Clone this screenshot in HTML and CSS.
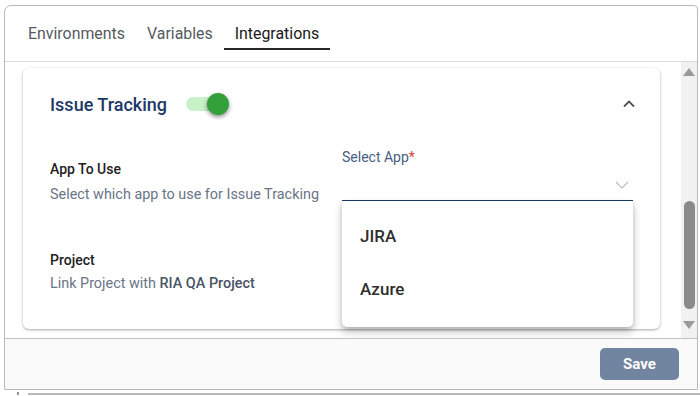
FILE: index.html
```html
<!DOCTYPE html>
<html lang="en">
<head>
    <meta charset="UTF-8">
    <title>Integrations</title>
    <link rel="stylesheet" href="styles.css">
</head>
<body>
    <div class="dialog">
        <div class="tabs">
            <div class="tab">Environments</div>
            <div class="tab">Variables</div>
            <div class="tab active">Integrations</div>
        </div>

        <div class="content">
            <div class="scroll-area">
                <div class="card">
                    <div class="card-header">
                        <h2>Issue Tracking</h2>
                        <div class="toggle"><span class="knob"></span></div>
                        <svg class="collapse" width="14" height="14" viewBox="0 0 14 14">
                            <path d="M2 9.5 L7 4.5 L12 9.5" fill="none" stroke="#555" stroke-width="1.8"/>
                        </svg>
                    </div>

                    <div class="row">
                        <div class="info">
                            <div class="label">App To Use</div>
                            <div class="desc">Select which app to use for Issue Tracking</div>
                        </div>
                        <div class="field">
                            <div class="field-label">Select App<span class="req">*</span></div>
                            <div class="field-input">
                                <svg width="14" height="10" viewBox="0 0 14 10">
                                    <path d="M1 2 L7 8 L13 2" fill="none" stroke="#bbb" stroke-width="1.1"/>
                                </svg>
                            </div>
                            <ul class="menu">
                                <li>JIRA</li>
                                <li>Azure</li>
                            </ul>
                        </div>
                    </div>

                    <div class="row project">
                        <div class="info">
                            <div class="label">Project</div>
                            <div class="desc">Link Project with <b>RIA QA Project</b></div>
                        </div>
                    </div>
                </div>
            </div>
            <div class="scrollbar">
                <span class="arrow up"></span>
                <span class="thumb"></span>
                <span class="arrow down"></span>
            </div>
        </div>

        <div class="footer">
            <button type="button" class="save">Save</button>
        </div>
    </div>
    <div class="under">
        <span class="mark"></span>
        <span class="line"></span>
    </div>
</body>
</html>
```

FILE: styles.css
```css
body {
    margin: 0;
    background: #ffffff;
    font-family: Roboto, "Liberation Sans", Arial, sans-serif;
}

.dialog {
    margin: 5px 2px 0 4px;
    height: 385px;
    border: 1px solid #b9b9b9;
    border-radius: 7px 4px 0 0;
    display: flex;
    flex-direction: column;
    overflow: hidden;
    box-sizing: border-box;
}

.tabs {
    display: flex;
    padding: 10px 0 0 12px;
    height: 56px;
    box-sizing: border-box;
    border-bottom: 1px solid #dcdcdc;
}

.tab {
    padding: 0 11px;
    height: 34px;
    line-height: 35px;
    font-size: 15.9px;
    color: #555a60;
    border-bottom: 2px solid transparent;
    box-sizing: border-box;
}

.tab.active {
    color: #1a1a1a;
    border-bottom-color: #262626;
}

.content {
    display: flex;
    height: 276px;
    border-bottom: 1px solid #c4c4c4;
}

.scroll-area {
    flex: 1;
    padding: 6px 21px 0 18px;
    overflow: hidden;
}

.card {
    position: relative;
    height: 261px;
    background: #ffffff;
    border-radius: 6px;
    box-shadow: 0 1px 3px rgba(0, 0, 0, 0.28), 0 1px 2px rgba(0, 0, 0, 0.08);
    padding: 0 27px;
    box-sizing: border-box;
}

.card-header {
    display: flex;
    align-items: center;
    height: 72px;
}

.card-header h2 {
    margin: 0;
    font-size: 18px;
    font-weight: 500;
    color: #1d3767;
}

.toggle {
    position: relative;
    width: 36px;
    height: 14px;
    margin-left: 19px;
    border-radius: 7px;
    background: #c9f1c9;
}

.knob {
    position: absolute;
    right: -7px;
    top: -4px;
    width: 22px;
    height: 22px;
    border-radius: 50%;
    background: #33a03a;
    box-shadow: 0 2px 4px rgba(0, 0, 0, 0.45);
}

.collapse {
    margin-left: auto;
    margin-right: -3px;
}

.row {
    display: flex;
    justify-content: space-between;
}

.label {
    font-size: 14px;
    font-weight: 500;
    color: #222;
    margin-top: 21px;
}

.desc {
    font-size: 14.4px;
    color: #6a7487;
    margin-top: 9px;
}

.desc b {
    font-weight: 500;
    color: #4a5465;
}

.field {
    position: relative;
    width: 291px;
}

.field-label {
    font-size: 14px;
    color: #475d82;
    margin-top: 9px;
}

.req {
    color: #e53935;
}

.field-input {
    height: 36px;
    border-bottom: 1px solid #1e3765;
    display: flex;
    justify-content: flex-end;
    align-items: center;
    padding: 4px 4px 0 0;
    box-sizing: border-box;
}

.menu {
    position: absolute;
    left: 0;
    right: 0;
    top: 61px;
    margin: 0;
    padding: 9px 0 11px;
    list-style: none;
    background: #ffffff;
    border-radius: 0 0 5px 5px;
    box-shadow: 0 5px 10px rgba(0, 0, 0, 0.22), 0 2px 4px rgba(0, 0, 0, 0.14);
    z-index: 2;
}

.menu li {
    padding: 0 18px;
    height: 53px;
    line-height: 53px;
    font-size: 17px;
    font-weight: 500;
    color: #2e2e2e;
}

.project .label {
    margin-top: 49px;
}

.project .desc {
    margin-top: 7px;
}

.scrollbar {
    width: 16px;
    background: #f1f1f1;
    display: flex;
    flex-direction: column;
    align-items: center;
}

.arrow {
    width: 0;
    height: 0;
    border-left: 6px solid transparent;
    border-right: 6px solid transparent;
}

.arrow.up {
    margin-top: 6px;
    border-bottom: 8px solid #9a9a9a;
}

.thumb {
    width: 11px;
    height: 108px;
    margin-top: 125px;
    border-radius: 6px;
    background: #8a8a8a;
}

.arrow.down {
    margin-top: 12px;
    border-top: 8px solid #9a9a9a;
}

.footer {
    flex: 1;
    background: #fafafa;
    display: flex;
    justify-content: flex-end;
    align-items: flex-start;
    padding: 9px 18px 0 0;
}

.save {
    width: 79px;
    height: 32px;
    border: none;
    border-radius: 5px;
    background: #7184a0;
    color: #ffffff;
    font-family: inherit;
    font-size: 15px;
    font-weight: 700;
}

.under {
    display: flex;
    align-items: center;
    margin-top: 2px;
}

.under .mark {
    width: 2px;
    height: 3px;
    margin-left: 17px;
    background: #999;
}

.under .line {
    flex: 1;
    height: 2px;
    margin-left: 9px;
    background: #b8b8b8;
}
```
